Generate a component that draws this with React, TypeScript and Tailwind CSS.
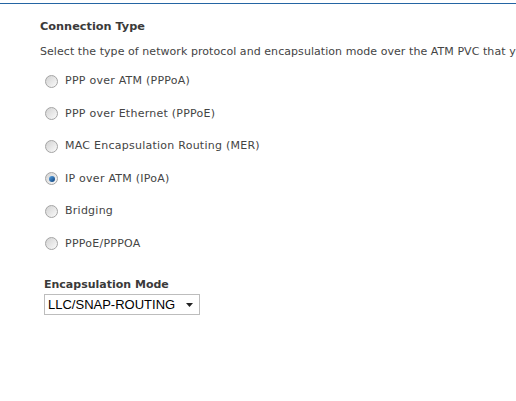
import React from "react";

const OPTIONS = [
  { id: "pppoa", label: "PPP over ATM (PPPoA)" },
  { id: "pppoe", label: "PPP over Ethernet (PPPoE)" },
  { id: "mer", label: "MAC Encapsulation Routing (MER)" },
  { id: "ipoa", label: "IP over ATM (IPoA)" },
  { id: "bridge", label: "Bridging" },
  { id: "pppoe_pppoa", label: "PPPoE/PPPOA" },
];

function Radio({ checked }: { checked: boolean }) {
  return (
    <span className="relative flex h-[13px] w-[13px] shrink-0 items-center justify-center rounded-full border border-[#a4a4a4] bg-gradient-to-br from-[#d2d2d2] to-[#fbfbfb]">
      {checked && (
        <span className="h-[6px] w-[6px] rounded-full bg-gradient-to-br from-[#5aa6e6] to-[#0b3f7a]" />
      )}
    </span>
  );
}

export default function App() {
  return (
    <div className="h-[401px] w-[516px] overflow-hidden bg-white font-['DejaVu_Sans',sans-serif] text-[11px] text-[#444]">
      {/* top rule */}
      <div className="mt-[3px] h-px w-full bg-[#2465a3]" />

      <div className="pl-10">
        <h2 className="mt-[15px] h-4 text-[11.3px] font-bold leading-4 text-[#3a3a3a]">
          Connection Type
        </h2>
        <p className="mt-[9px] h-4 overflow-hidden whitespace-nowrap leading-4 tracking-[0.06px]">
          Select the type of network protocol and encapsulation mode over the ATM PVC that your ISP has instructed you to use.
        </p>

        {/* protocol radios */}
        <div className="mt-[5px] flex flex-col pl-[5px]">
          {OPTIONS.map((o) => (
            <label key={o.id} className="flex h-[32.5px] items-center gap-[7px]">
              <Radio checked={o.id === "ipoa"} />
              <span className="leading-4 tracking-[0.25px]">{o.label}</span>
            </label>
          ))}
        </div>

        {/* encapsulation */}
        <div className="mt-[17px] pl-1">
          <div className="h-4 text-[11px] font-bold leading-4 text-[#3a3a3a]">
            Encapsulation Mode
          </div>
          <div className="mt-px flex h-[21px] w-[156px] items-center justify-between border border-[#bdbdbd] bg-white pl-[3px] pr-[6px] font-['Liberation_Sans',sans-serif] text-[13px] text-black">
            <span>LLC/SNAP-ROUTING</span>
            <svg width="7" height="4" viewBox="0 0 7 4">
              <path d="M0 0h7L3.5 4z" fill="#222" />
            </svg>
          </div>
        </div>
      </div>
    </div>
  );
}
